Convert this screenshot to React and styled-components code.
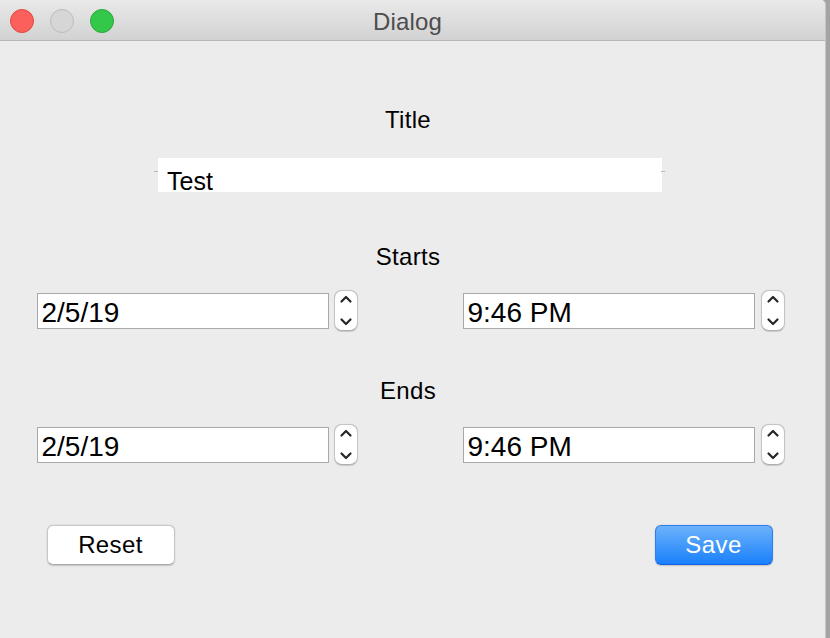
import React from "react";
import styled, { createGlobalStyle } from "styled-components";

const Global = createGlobalStyle`
  html, body { margin: 0; padding: 0; }
  body {
    background: #a4a4a4;
    font-family: "Liberation Sans", Arial, sans-serif;
    overflow: hidden;
  }
`;

const Window = styled.div`
  width: 825px;
  height: 638px;
  background: #ececec;
  border-right: 1px solid #c6c6c6;
  border-top-right-radius: 5px;
  overflow: hidden;
  display: flex;
  flex-direction: column;
`;

const TitleBar = styled.div`
  height: 40px;
  flex: none;
  border-bottom: 1px solid #b6b6b6;
  background: linear-gradient(#e9e9e9, #d2d2d2);
  display: grid;
  grid-template-columns: 1fr auto 1fr;
  align-items: center;
  padding: 0 10px 0 10px;
  box-sizing: content-box;
`;

const Lights = styled.div`
  display: flex;
  gap: 16px;
`;

const Light = styled.span`
  width: 22px;
  height: 22px;
  border-radius: 50%;
  background: ${(p) => p.$fill};
  border: 1px solid ${(p) => p.$edge};
`;

const WindowTitle = styled.div`
  font-size: 24px;
  line-height: 40px;
  padding-top: 2px;
  color: #4d4d4d;
  letter-spacing: 0.2px;
  margin-right: 10px;
`;

const Body = styled.div`
  display: flex;
  flex-direction: column;
  align-items: center;
  padding: 65px 41px 0 37px;
`;

const Label = styled.div`
  font-size: 24px;
  line-height: 28px;
  color: #000;
  letter-spacing: 0.3px;
  margin-top: ${(p) => p.$top}px;
  margin-left: -5px;
`;

const TitleField = styled.div`
  position: relative;
  width: 504px;
  height: 34px;
  margin-top: 24px;
  margin-left: -1px;
  box-sizing: border-box;
  background: #fff;
  font-size: 25px;
  line-height: 34px;
  padding: 6px 9px 0;
  color: #000;
  &::before,
  &::after {
    content: "";
    position: absolute;
    top: 13px;
    width: 4px;
    height: 1px;
    background: #b8b8b8;
  }
  &::before { left: -4px; }
  &::after { right: -3px; }
`;

const Clip = styled.div`
  height: 28px;
  overflow: hidden;
`;

const Row = styled.div`
  width: 748px;
  display: flex;
  justify-content: space-between;
  align-items: center;
  margin-top: ${(p) => p.$top}px;
`;

const Group = styled.div`
  display: flex;
  align-items: center;
  gap: ${(p) => p.$gap}px;
`;

const Field = styled.div`
  width: 292px;
  height: 36px;
  box-sizing: border-box;
  border: 1px solid #a9a9a9;
  background: #fff;
  font-size: 28px;
  line-height: 34px;
  padding: 2px 0 0 4px;
  color: #000;
`;

const StepperBox = styled.div`
  width: 24px;
  height: 41px;
  box-sizing: border-box;
  border-radius: 8px;
  background: #fff;
  border: 1px solid #c4c4c4;
  border-bottom-color: #aeaeae;
  box-shadow: 0 0.5px 1px rgba(0, 0, 0, 0.15);
  display: flex;
  align-items: center;
  justify-content: center;
`;

const Stepper = () => (
  <StepperBox>
    <svg width="22" height="39" viewBox="0 0 22 39">
      <path d="M6.5 10.5 L11 6 L15.5 10.5" fill="none" stroke="#262626" strokeWidth="2.2" strokeLinecap="round" strokeLinejoin="round" />
      <path d="M6.5 28.5 L11 33 L15.5 28.5" fill="none" stroke="#262626" strokeWidth="2.2" strokeLinecap="round" strokeLinejoin="round" />
    </svg>
  </StepperBox>
);

const Buttons = styled.div`
  width: 726px;
  display: flex;
  justify-content: space-between;
  margin-top: 60px;
  margin-left: -2px;
`;

const Button = styled.button`
  width: ${(p) => p.$w}px;
  height: 40px;
  box-sizing: border-box;
  border-radius: 6px;
  font-family: "Liberation Sans", Arial, sans-serif;
  font-size: 24px;
  line-height: 38px;
  letter-spacing: 0.4px;
  padding: 0;
  cursor: default;
  border: 1px solid ${(p) => (p.$primary ? "#2a7ef0" : "#c6c6c6")};
  border-bottom-color: ${(p) => (p.$primary ? "#1463e6" : "#aaaaaa")};
  color: ${(p) => (p.$primary ? "#fff" : "#000")};
  background: ${(p) =>
    p.$primary ? "linear-gradient(#6cb2fb, #1a80fb)" : "#fff"};
  box-shadow: 0 0.5px 1.5px rgba(0, 0, 0, 0.18);
`;

const DateRow = ({ top }) => (
  <Row $top={top}>
    <Group $gap={5}>
      <Field>2/5/19</Field>
      <Stepper />
    </Group>
    <Group $gap={6}>
      <Field>9:46 PM</Field>
      <Stepper />
    </Group>
  </Row>
);

export default function App() {
  return (
    <>
      <Global />
      <Window>
        <TitleBar>
          <Lights>
            <Light $fill="#fc605c" $edge="#e0483f" />
            <Light $fill="#d6d6d6" $edge="#bcbcbc" />
            <Light $fill="#34c84a" $edge="#28a83a" />
          </Lights>
          <WindowTitle>Dialog</WindowTitle>
          <span />
        </TitleBar>
        <Body>
          <Label $top={0}>Title</Label>
          <TitleField>
            <Clip>Test</Clip>
          </TitleField>
          <Label $top={51}>Starts</Label>
          <DateRow top={19} />
          <Label $top={46}>Ends</Label>
          <DateRow top={19} />
          <Buttons>
            <Button $w={128}>Reset</Button>
            <Button $w={118} $primary>Save</Button>
          </Buttons>
        </Body>
      </Window>
    </>
  );
}
